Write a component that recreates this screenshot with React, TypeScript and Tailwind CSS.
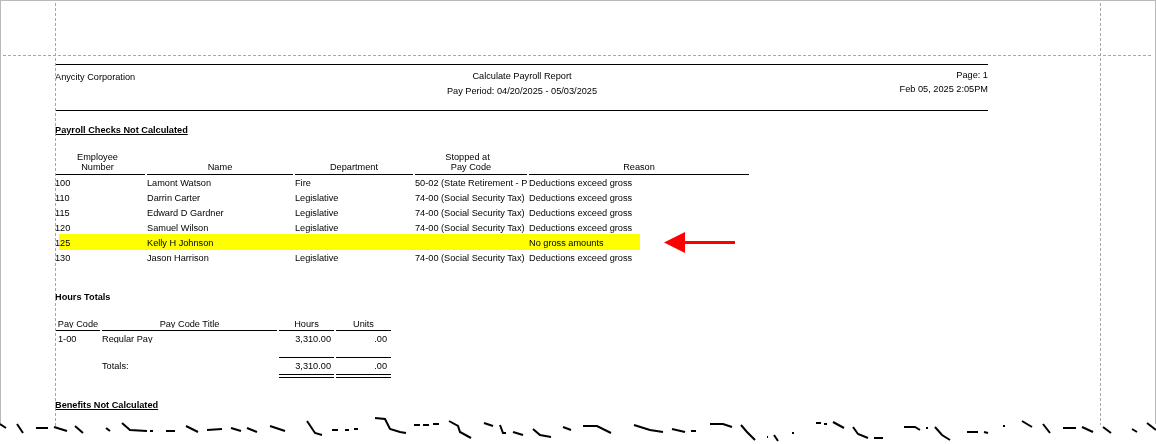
const tornEdge = [
  "0,424 6,428", "17,424 23,433", "36,428 48,428", "54,427 67,431", "75,426 83,433", "106,428 110,431",
  "122,423 130,430 147,431", "150,431 153,431", "166,431 175,431", "186,426 198,432", "207,430 222,429",
  "231,428 241,431", "247,428 257,432", "270,426 285,431", "307,421 315,433 322,435", "332,430 338,430",
  "345,430 349,430", "354,429 358,429", "375,418 385,419 390,429 400,432 406,433", "414,425 420,425",
  "423,425 429,425", "433,424 439,424", "449,421 458,426 460,432 471,438", "484,423 493,426",
  "500,425 503,433 506,433", "513,432 523,435", "533,429 540,435 551,437", "563,427 571,430",
  "583,426 597,426 611,433", "634,425 650,430 663,432", "672,429 685,432", "691,431 696,431",
  "710,424 723,424 732,427", "741,425 747,432 755,440", "767,437 768,437", "774,435 778,441", "792,433 794,433",
  "816,423 821,423", "824,424 827,424", "833,422 844,428", "853,427 858,434 868,438", "874,438 883,438",
  "904,427 915,427 920,430", "926,428 928,428", "935,427 942,435 950,440", "967,432 978,432", "984,432 988,433",
  "1003,426 1005,426", "1022,421 1032,427", "1043,424 1050,433", "1063,428 1076,428", "1082,427 1093,432",
  "1103,427 1111,433", "1132,429 1137,432", "1147,423 1156,430",
];

const checks = [
  { id: "100", name: "Lamont Watson", dept: "Fire", code: "50-02 (State Retirement - P", reason: "Deductions exceed gross" },
  { id: "110", name: "Darrin Carter", dept: "Legislative", code: "74-00 (Social Security Tax)", reason: "Deductions exceed gross" },
  { id: "115", name: "Edward D Gardner", dept: "Legislative", code: "74-00 (Social Security Tax)", reason: "Deductions exceed gross" },
  { id: "120", name: "Samuel Wilson", dept: "Legislative", code: "74-00 (Social Security Tax)", reason: "Deductions exceed gross", tight: true },
  { id: "125", name: "Kelly H Johnson", dept: "", code: "", reason: "No gross amounts" },
  { id: "130", name: "Jason Harrison", dept: "Legislative", code: "74-00 (Social Security Tax)", reason: "Deductions exceed gross", tight: true },
];

export default function App() {
  return (
    <div className="relative h-[444px] w-[1156px] overflow-hidden bg-white font-['Liberation_Sans',Arial,sans-serif] text-[9.2px] text-black">
      {/* window frame */}
      <div className="h-[424px] border-x border-t border-[#b9b9b9] pl-[54px] pt-[63px]">
        {/* report header */}
        <div className="ml-px grid h-[47px] w-[932px] grid-cols-3 border-y border-black">
          <div className="-ml-px pt-[5px] leading-[15px]">Anycity Corporation</div>
          <div className="pt-1 text-center leading-[15px]">
            <p>Calculate Payroll Report</p>
            <p>Pay Period: 04/20/2025 - 05/03/2025</p>
          </div>
          <div className="pt-[3px] text-right leading-[14px]">
            <p>Page: 1</p>
            <p>Feb 05, 2025 2:05PM</p>
          </div>
        </div>

        <h2 className="mt-3 font-bold leading-[15px] underline underline-offset-1">Payroll Checks Not Calculated</h2>

        {/* checks table */}
        <div className="relative mt-[14px] w-[694px]">
          <div className="grid grid-cols-[90px_146px_118px_112px_220px] items-end gap-x-[2px] text-center leading-[10px]">
            <div className="border-b border-black pb-[2px] pr-[5px]">
              Employee
              <br />
              Number
            </div>
            <div className="border-b border-black pb-[2px]">Name</div>
            <div className="border-b border-black pb-[2px]">Department</div>
            <div className="border-b border-black pb-[2px]">
              <span className="pr-[7px]">Stopped at</span>
              <br />
              Pay Code
            </div>
            <div className="border-b border-black pb-[2px]">Reason</div>
          </div>
          <div className="pt-px">
            {checks.map((row) => (
              <div key={row.id} className="h-[15px]">
                <div
                  className={
                    row.tight
                      ? "grid h-3 grid-cols-[90px_146px_118px_112px_220px] gap-x-[2px] overflow-hidden whitespace-nowrap leading-[15px]"
                      : "grid h-[15px] grid-cols-[90px_146px_118px_112px_220px] gap-x-[2px] overflow-hidden whitespace-nowrap leading-[15px]"
                  }
                >
                  <div>{row.id}</div>
                  <div>{row.name}</div>
                  <div>{row.dept}</div>
                  <div>{row.code}</div>
                  <div>{row.reason}</div>
                </div>
              </div>
            ))}
          </div>
          {/* highlighter and arrow over row 125 */}
          <div className="absolute left-[4px] top-[82px] h-4 w-[581px] bg-[#ffff00] mix-blend-multiply" />
          <svg className="absolute left-[608px] top-[78px]" width="74" height="25" viewBox="0 0 74 25">
            <path d="M20 11h52v3H20z" fill="#ff0000" />
            <path d="M1 12.500 22 2V23z" fill="#ff0000" />
          </svg>
        </div>

        <h3 className="mt-[24px] font-bold leading-[15px]">Hours Totals</h3>

        {/* hours table */}
        <div className="ml-px mt-[13px] grid w-[335px] grid-cols-[44px_175px_55px_55px] gap-x-[2px]">
          <div className="border-b border-black pb-[2px] text-center leading-3">
            <div className="h-[10px] overflow-hidden">Pay Code</div>
          </div>
          <div className="border-b border-black pb-[2px] text-center leading-3">
            <div className="h-[10px] overflow-hidden">Pay Code Title</div>
          </div>
          <div className="border-b border-black text-center leading-3">Hours</div>
          <div className="border-b border-black text-center leading-3">Units</div>

          <div className="h-[26px] pl-[2px] leading-[17px]">1-00</div>
          <div className="h-3 overflow-hidden leading-[17px]">Regular Pay</div>
          <div className="pr-[3px] text-right leading-[17px]">3,310.00</div>
          <div className="pr-1 text-right leading-[17px]">.00</div>

          <div />
          <div className="pt-px leading-[17px]">Totals:</div>
          <div className="h-[21px] border-t border-b-4 border-double border-black pr-[3px] text-right leading-[17px]">3,310.00</div>
          <div className="h-[21px] border-t border-b-4 border-double border-black pr-1 text-right leading-[17px]">.00</div>
        </div>

        <h2 className="mt-5 font-bold leading-[15px] underline underline-offset-1">Benefits Not Calculated</h2>
      </div>

      {/* dashed margin guides */}
      <div className="absolute left-[3px] top-[55px] h-px w-[1150px] bg-[repeating-linear-gradient(90deg,#a6a6a6_0_3px,transparent_3px_5px)]" />
      <div className="absolute left-[55px] top-[3px] h-[423px] w-px bg-[repeating-linear-gradient(180deg,#a6a6a6_0_3px,transparent_3px_5px)]" />
      <div className="absolute left-[1100px] top-[3px] h-[422px] w-px bg-[repeating-linear-gradient(180deg,#a6a6a6_0_3px,transparent_3px_5px)]" />

      {/* torn paper edge */}
      <svg className="absolute left-0 top-0" width="1156" height="444" viewBox="0 0 1156 444" fill="none" stroke="#000" strokeWidth="2">
        {tornEdge.map((points) => (
          <polyline key={points} points={points} />
        ))}
      </svg>
    </div>
  );
}
